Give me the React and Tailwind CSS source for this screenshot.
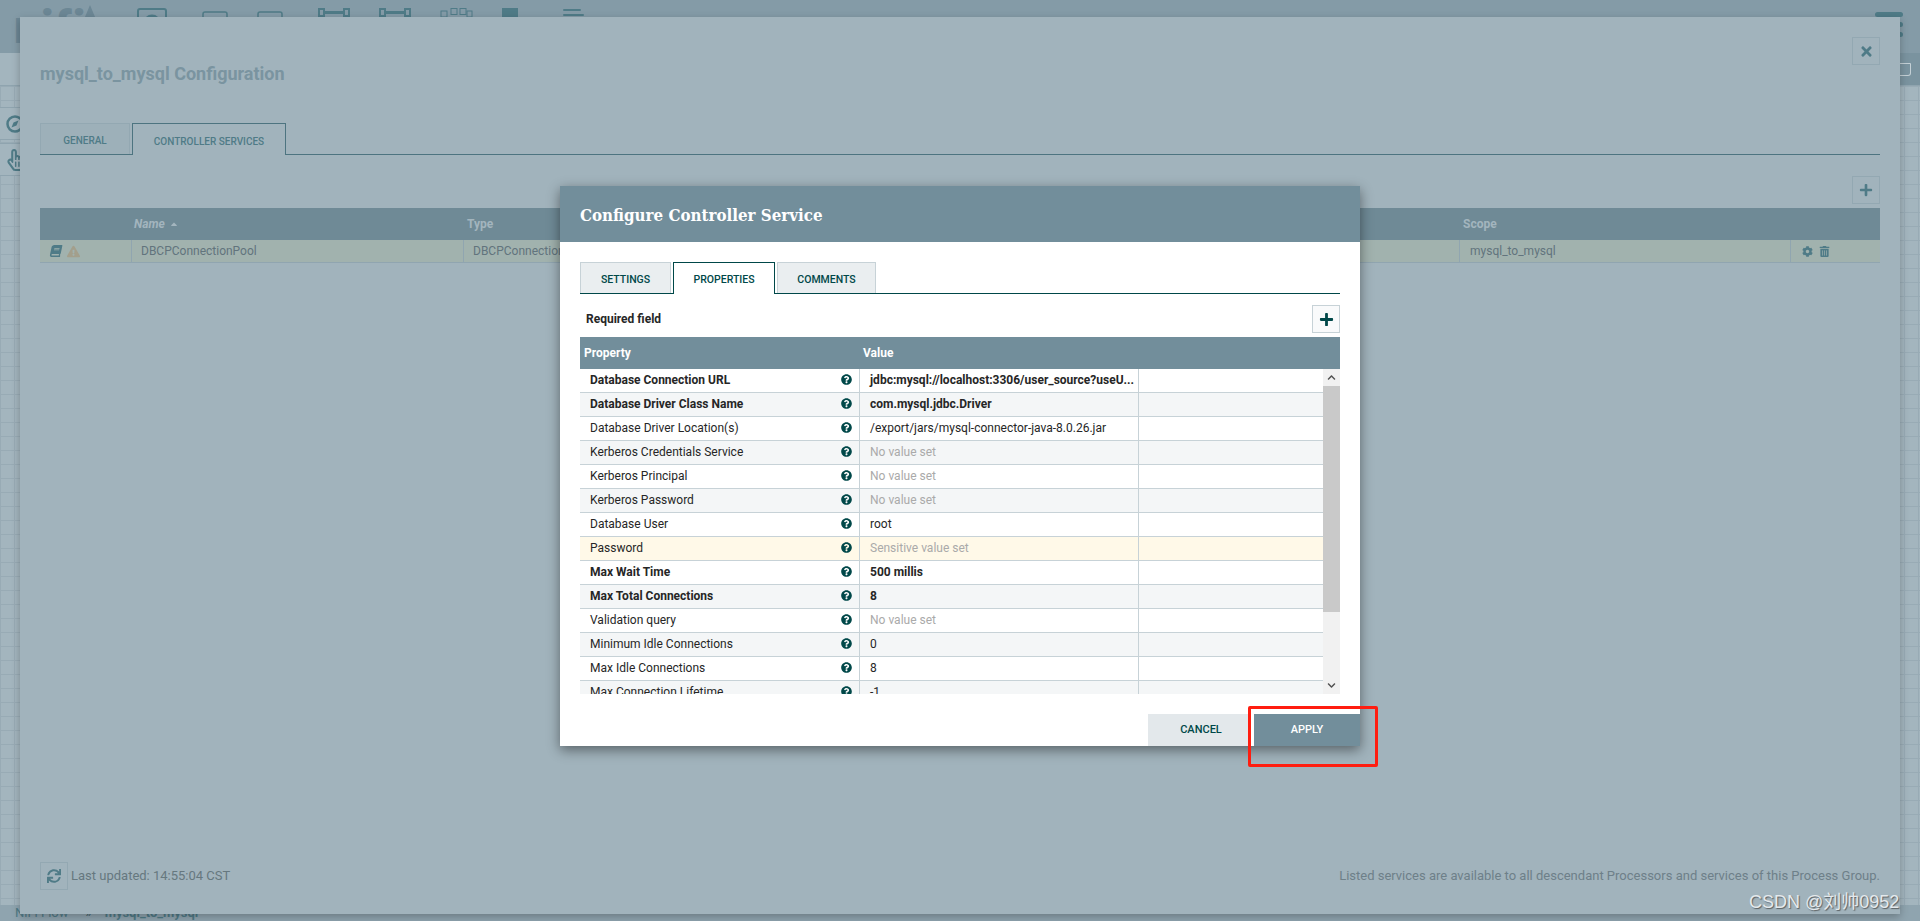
import React from "react";
import { FaQuestionCircle, FaPlus, FaTimes, FaSync, FaBook, FaExclamationTriangle, FaCog, FaTrashAlt, FaRegHandPointer, FaCaretUp, FaChevronUp, FaChevronDown } from "react-icons/fa";

const rows = [
  ["Database Connection URL", "jdbc:mysql://localhost:3306/user_source?useU...", "b"],
  ["Database Driver Class Name", "com.mysql.jdbc.Driver", "b"],
  ["Database Driver Location(s)", "/export/jars/mysql-connector-java-8.0.26.jar", ""],
  ["Kerberos Credentials Service", "No value set", "u"],
  ["Kerberos Principal", "No value set", "u"],
  ["Kerberos Password", "No value set", "u"],
  ["Database User", "root", ""],
  ["Password", "Sensitive value set", "s"],
  ["Max Wait Time", "500 millis", "b"],
  ["Max Total Connections", "8", "b"],
  ["Validation query", "No value set", "u"],
  ["Minimum Idle Connections", "0", ""],
  ["Max Idle Connections", "8", ""],
  ["Max Connection Lifetime", "-1", ""],
];

function TopBar() {
  return (
    <div className="flex h-[53px] shrink-0 items-start overflow-hidden bg-[#849ba7] pt-2 text-[#4f7b87]">
      <span className="ml-[14px] w-[66px] font-['Roboto'] text-[46px] leading-[38px] font-black tracking-wide text-[#6c8795]">nifi</span>
      <svg width="20" height="24" viewBox="0 0 20 24" className="mt-[-3px] text-[#6c8795]"><path d="M10 0 20 24H0Z" fill="currentColor" /></svg>
      <svg width="30" height="30" viewBox="0 0 30 30" className="ml-[37px]" fill="none" stroke="currentColor" strokeWidth="2"><rect x="1" y="1" width="28" height="28" rx="2" /><circle cx="15" cy="15" r="7" strokeWidth="3" /></svg>
      <svg width="26" height="26" viewBox="0 0 26 26" className="ml-[35px] mt-[3px]" fill="none" stroke="currentColor" strokeWidth="1.5"><rect x="1" y="1" width="24" height="24" rx="2" /></svg>
      <svg width="26" height="26" viewBox="0 0 26 26" className="ml-[29px] mt-[3px]" fill="none" stroke="currentColor" strokeWidth="1.5"><rect x="1" y="1" width="24" height="24" rx="2" /></svg>
      <svg width="32" height="24" viewBox="0 0 32 24" className="ml-[35px]" fill="none" stroke="currentColor" strokeWidth="2"><rect x="1" y="1" width="5" height="7" /><rect x="26" y="1" width="5" height="7" /><path d="M7 4.5h18" strokeWidth="3" /></svg>
      <svg width="32" height="24" viewBox="0 0 32 24" className="ml-[29px]" fill="none" stroke="currentColor" strokeWidth="2"><rect x="1" y="1" width="5" height="7" /><rect x="26" y="1" width="5" height="7" /><path d="M7 4.5h18" strokeWidth="3" /></svg>
      <svg width="33" height="24" viewBox="0 0 33 24" className="ml-[29px]" fill="none" stroke="currentColor" strokeWidth="1"><rect x="1" y="3" width="6" height="6" /><rect x="11" y="0.5" width="6" height="6" /><rect x="20" y="0.5" width="6" height="6" /><rect x="27" y="3" width="5" height="6" /></svg>
      <div className="ml-[29px] h-[9px] w-[16px] bg-[#4f7b87]" />
      <div className="ml-[45px] flex w-[18px] flex-col gap-[3px] pt-px">
        <div className="h-[2px] w-[18px] rounded bg-[#4f7b87]" />
        <div className="h-[2px] w-[21px] rounded bg-[#4f7b87]" />
      </div>
      <div className="ml-auto mr-[17px] mt-[4px] flex w-[28px] flex-col gap-[5px]">
        <div className="h-[5px] rounded-sm bg-[#4f7b87]" />
        <div className="h-[5px] rounded-sm bg-[#4f7b87]" />
        <div className="h-[5px] rounded-sm bg-[#4f7b87]" />
      </div>
    </div>
  );
}

function Canvas() {
  return (
    <div className="flex flex-1 flex-col overflow-hidden bg-[#a3b5be]">
      <div className="flex h-[33px] shrink-0 justify-end border-b border-[#8fa4af] bg-[#a3b5be]">
        <div className="flex w-[20px] items-center justify-start bg-[#7a939f]">
          <div className="h-[13px] w-[11px] rounded-br-[3px] rounded-tr-[1px] border border-l-0 border-[#c4d0d6]" />
        </div>
      </div>
      <div className="flex-1 bg-[linear-gradient(#98abb5_1px,transparent_1px),linear-gradient(90deg,#98abb5_1px,transparent_1px)] bg-size-[14px_14px]">
        <div className="mt-[21px] flex w-[20px] flex-col gap-[3px]">
          <div className="flex h-[33px] items-center overflow-hidden border-y border-[#8fa4af] bg-[#a3b5be] pl-[6px]">
            <svg width="18" height="18" viewBox="0 0 18 18" className="shrink-0 text-[#4f7b87]" fill="none" stroke="currentColor"><circle cx="9" cy="9" r="7.5" strokeWidth="2.5" /><path d="M12.5 5.5 10.5 10.5 5.5 12.5 7.5 7.5Z" fill="currentColor" stroke="none" /></svg>
          </div>
          <div className="flex h-[33px] items-center overflow-hidden border-y border-[#8fa4af] bg-[#a3b5be] pl-[6px] text-[#4f7b87]">
            <FaRegHandPointer className="shrink-0 text-[22px]" />
          </div>
        </div>
      </div>
      <div className="flex h-[16px] shrink-0 items-center bg-[#8fa4af] pl-[15px] font-['Roboto'] text-[13px] text-[#4f7b87]">
        <span>NiFi Flow</span>
        <span className="ml-[17px] text-[#3f5c66]">»</span>
        <span className="ml-[13px] font-bold">mysql_to_mysql</span>
      </div>
    </div>
  );
}

function OuterDialog() {
  return (
    <div className="absolute left-[20px] top-[17px] z-10 flex h-[897px] w-[1880px] flex-col bg-[#a1b3bc] px-5 pt-5 pb-6 font-['Roboto'] shadow-[0_3px_8px_rgba(0,0,0,0.25)]">
      <div className="flex h-[86px] shrink-0 items-start justify-between">
        <div className="mt-[25px] text-[18px] leading-6 font-bold text-[#7a94a0]">mysql_to_mysql Configuration</div>
        <div className="flex h-7 w-7 items-center justify-center border border-[#93a8b2] text-[15px] text-[#4f7b87]"><FaTimes /></div>
      </div>
      <div className="flex h-8 shrink-0 border-b border-[#4d7480] text-[10px] font-medium">
        <div className="flex h-[31px] w-[90px] items-center justify-center border border-b-0 border-[#93a8b2] bg-[#9db0b9] pt-[3px] text-[#4f7b87]">GENERAL</div>
        <div className="ml-[2px] flex h-[32px] w-[154px] items-center justify-center border border-b-0 border-[#4d7480] bg-[#a1b3bc] pt-[3px] text-[#4f7b87]">CONTROLLER SERVICES</div>
      </div>
      <div className="mt-[21px] flex shrink-0 justify-end">
        <div className="flex h-7 w-7 items-center justify-center border border-[#93a8b2] text-[14px] text-[#4f7b87]"><FaPlus /></div>
      </div>
      <div className="mt-[4px] grid h-8 shrink-0 grid-cols-[91px_332px_1fr_331px_90px] items-center bg-[#6f8a96] text-[12px] font-bold text-[#a3b5be]">
        <div />
        <div className="flex items-center gap-1 pl-[3px] italic">Name <FaCaretUp className="text-[10px]" /></div>
        <div className="pl-[4px]">Type</div>
        <div className="pl-[4px]">Scope</div>
        <div />
      </div>
      <div className="grid h-[23px] shrink-0 grid-cols-[91px_332px_1fr_331px_90px] items-stretch border-b border-[#90a5b0] bg-[#a1b2ae] text-[12px] text-[#62747d]">
        <div className="flex items-center gap-[5px] pl-[10px]">
          <FaBook className="-skew-x-12 text-[12px] text-[#4f7b87]" />
          <FaExclamationTriangle className="text-[13px] text-[#a39f8c]" />
        </div>
        <div className="flex items-center border-l border-[#90a5b0] pl-[9px]">DBCPConnectionPool</div>
        <div className="flex items-center border-l border-[#90a5b0] pl-[9px]">DBCPConnectionPool</div>
        <div className="flex items-center border-l border-[#90a5b0] pl-[10px]">mysql_to_mysql</div>
        <div className="flex items-center gap-[6px] border-l border-[#90a5b0] pl-[11px] text-[11px] text-[#4f7b87]"><FaCog /><FaTrashAlt /></div>
      </div>
      <div className="flex-1" />
      <div className="flex h-7 shrink-0 items-center">
        <div className="flex h-7 w-7 items-center justify-center border border-[#93a8b2] text-[14px] text-[#4f7b87]"><FaSync /></div>
        <div className="ml-[3px] text-[13px] text-[#66787f]">Last updated: 14:55:04 CST</div>
        <div className="ml-auto text-[13px] text-[#6e8089]">Listed services are available to all descendant Processors and services of this Process Group.</div>
      </div>
    </div>
  );
}

function PropertyRow({ row, index }) {
  const [name, value, kind] = row;
  const bg = kind === "s" ? "bg-[#fff9e8]" : index % 2 === 0 ? "bg-white" : "bg-[#f4f6f7]";
  const nameStyle = kind === "b" ? "font-bold" : "";
  const valueStyle = kind === "b" ? "font-bold text-[#262626]" : kind === "u" || kind === "s" ? "text-[#aaaaaa]" : "text-[#262626]";
  return (
    <div className={`flex h-[24px] shrink-0 border-b border-[#c7d2d7] text-[12px] ${bg}`}>
      <div className={`flex w-[279px] shrink-0 items-center justify-between pb-[2px] pl-[10px] pr-[7px] text-[#262626] ${nameStyle}`}>
        <span>{name}</span>
        <FaQuestionCircle className="mb-px text-[11px] text-[#004849]" />
      </div>
      <div className={`flex w-[279px] shrink-0 items-center border-l border-[#c7d2d7] pb-[2px] pl-[10px] ${valueStyle}`}>{value}</div>
      <div className="flex-1 border-l border-[#c7d2d7]" />
    </div>
  );
}

function InnerDialog() {
  return (
    <div className="absolute left-[560px] top-[186px] z-20 flex h-[560px] w-[800px] flex-col bg-white font-['Roboto'] shadow-[0_4px_12px_rgba(0,0,0,0.45)]">
      <div className="flex h-[56px] shrink-0 items-center bg-[#728e9b] pl-5 pt-[3px] font-['DejaVu_Serif'] text-[16.8px] font-bold text-white [font-stretch:condensed]">Configure Controller Service</div>
      <div className="flex flex-1 flex-col px-5 pt-5">
        <div className="flex h-8 shrink-0 border-b border-[#004849] text-[10.5px] font-medium text-[#004849]">
          <div className="flex h-[31px] w-[91px] items-center justify-center border border-b-0 border-[#c7d2d7] bg-[#eaeef0] pt-[3px]">SETTINGS</div>
          <div className="ml-[2px] flex h-[32px] w-[102px] items-center justify-center border border-b-0 border-[#004849] bg-white pt-[3px]">PROPERTIES</div>
          <div className="ml-[2px] flex h-[31px] w-[99px] items-center justify-center border border-b-0 border-[#c7d2d7] bg-[#eaeef0] pt-[3px]">COMMENTS</div>
        </div>
        <div className="flex h-[43px] shrink-0 items-center justify-between pl-[6px] pt-[7px]">
          <span className="text-[12px] font-bold text-[#262626]">Required field</span>
          <div className="flex h-7 w-7 items-center justify-center border border-[#c7d2d7] bg-[#f9fafb] text-[15px] text-[#004849]"><FaPlus /></div>
        </div>
        <div className="flex h-8 shrink-0 items-center bg-[#728e9b] text-[12px] font-bold text-white">
          <div className="w-[279px] pl-1">Property</div>
          <div className="pl-1">Value</div>
        </div>
        <div className="flex h-[325px] shrink-0 overflow-hidden">
          <div className="flex min-w-0 flex-1 flex-col">
            {rows.map((r, i) => <PropertyRow key={r[0]} row={r} index={i} />)}
          </div>
          <div className="flex w-[17px] shrink-0 flex-col bg-[#f1f1f1] text-[#505050]">
            <div className="flex h-[17px] shrink-0 items-center justify-center text-[9px]"><FaChevronUp /></div>
            <div className="h-[226px] shrink-0 bg-[#c9c9c9]" />
            <div className="flex-1" />
            <div className="flex h-[17px] shrink-0 items-center justify-center text-[9px]"><FaChevronDown /></div>
          </div>
        </div>
      </div>
      <div className="flex shrink-0 justify-end text-[11px] font-medium">
        <div className="flex h-8 w-[100px] items-center justify-center bg-[#e3e8eb] pl-[6px] text-[#004849]">CANCEL</div>
        <div className="ml-[6px] flex h-8 w-[106px] items-center justify-center bg-[#728e9b] text-white">APPLY</div>
      </div>
    </div>
  );
}

export default function App() {
  return (
    <div className="relative flex h-[921px] w-[1920px] flex-col overflow-hidden">
      <TopBar />
      <Canvas />
      <OuterDialog />
      <InnerDialog />
      <div className="absolute left-[1248px] top-[706px] z-30 h-[61px] w-[130px] rounded-[2px] border-[3px] border-[#ff1d10]" />
      <div className="absolute left-[1749px] top-[891px] z-30 font-['Liberation_Sans','Noto_Sans_CJK_SC',sans-serif] text-[18px] leading-[22px] text-[#e4e9ec] [text-shadow:1px_1px_1px_rgba(60,60,60,0.7)]">CSDN @刘帅0952</div>
    </div>
  );
}
